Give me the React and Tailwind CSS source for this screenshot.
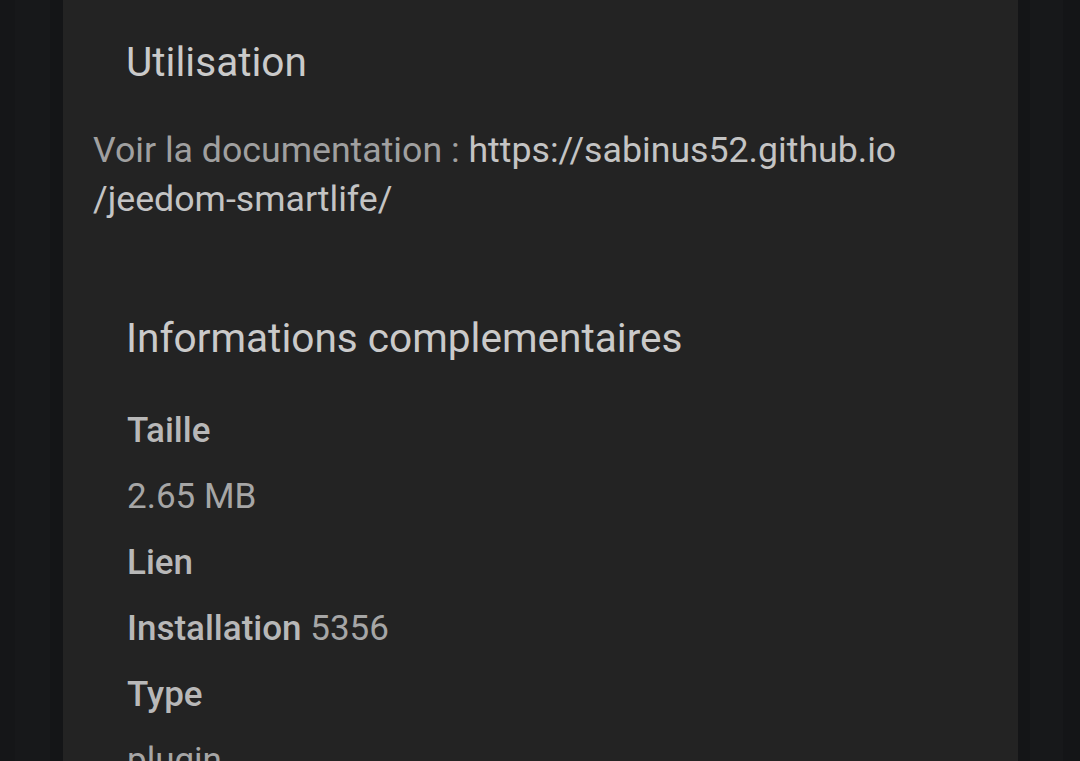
import React from "react";

const items = [
  { label: "Taille" },
  { value: "2.65 MB" },
  { label: "Lien" },
  { label: "Installation", value: "5356" },
  { label: "Type" },
  { value: "plugin" },
];

export default function App() {
  return (
    <div className="flex w-[1080px] h-[761px] overflow-hidden bg-[#151618] font-['Roboto',sans-serif]">
      <div className="w-[15px] bg-[#151618]" />
      <div className="w-[35px] bg-[#17181a]" />
      <div className="w-[13px] bg-[#141517]" />

      <div className="w-[955px] bg-[#232323] px-[30px]">
        <h2 className="mt-[38px] pl-[33px] text-[40.6px] leading-[48px] font-normal text-[#cacaca]">
          Utilisation
        </h2>
        <p className="mt-[40px] text-[35.7px] leading-[49px] text-[#a0a0a0]">
          Voir la documentation :{" "}
          <span className="text-[#c4c4c4]">https://sabinus52.github.io</span>
          <br />
          <span className="text-[#c4c4c4]">/jeedom-smartlife/</span>
        </p>

        <h2 className="mt-[90px] pl-[33px] text-[40.6px] leading-[48px] font-normal text-[#cacaca]">
          Informations complementaires
        </h2>
        <div className="mt-[36px] pl-[34px] flex flex-col">
          {items.map((it, i) => (
            <div key={i} className="text-[35px] leading-[66px] text-[#a6a6a6] whitespace-nowrap">
              {it.label && <span className="font-medium text-[#b8b8b8]">{it.label}</span>}
              {it.label && it.value && " "}
              {it.value && <span>{it.value}</span>}
            </div>
          ))}
        </div>
      </div>

      <div className="w-[12px] bg-[#141517]" />
      <div className="w-[33px] bg-[#17181a]" />
      <div className="w-[17px] bg-[#141517]" />
    </div>
  );
}
